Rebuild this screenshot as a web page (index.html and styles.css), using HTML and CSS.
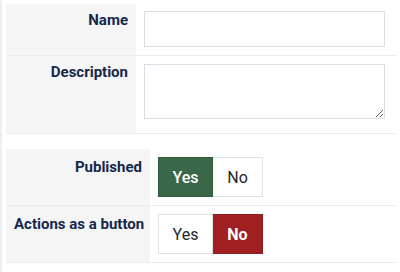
FILE: index.html
```html
<!DOCTYPE html>
<html lang="en">
<head>
    <meta charset="UTF-8">
    <title>Item options</title>
    <link rel="stylesheet" href="styles.css">
</head>
<body>
    <div class="page">
        <table class="form_table">
            <tr>
                <th class="label_cell">Name</th>
                <td class="field_cell"><input type="text" class="text_input"></td>
            </tr>
            <tr>
                <th class="label_cell">Description</th>
                <td class="field_cell field_area"><textarea class="text_area"></textarea></td>
            </tr>
        </table>

        <table class="form_table options_table">
            <tr>
                <th class="label_cell">Published</th>
                <td class="field_cell">
                    <div class="switcher">
                        <span class="switch_btn switch_yes active_yes">Yes</span>
                        <span class="switch_btn switch_no">No</span>
                    </div>
                </td>
            </tr>
            <tr>
                <th class="label_cell">Actions as a button</th>
                <td class="field_cell">
                    <div class="switcher">
                        <span class="switch_btn switch_yes">Yes</span>
                        <span class="switch_btn switch_no active_no">No</span>
                    </div>
                </td>
            </tr>
        </table>
    </div>
</body>
</html>
```

FILE: styles.css
```css
body {
    font-family: 'Roboto', 'Liberation Sans', sans-serif;
    margin: 0;
    padding: 0;
    background-color: #ffffff;
    color: #22262a;
}

.page {
    min-height: 272px;
    box-sizing: border-box;
    border-left: 2px solid #eaeff5; /* светлая полоса слева */
    padding: 4px 3px 0 4px;
}

.form_table {
    width: 391px;
    table-layout: fixed;
    border-collapse: collapse;
    margin-bottom: 15px;
    border-bottom: 1px solid #ececec;
}

.form_table tr {
    border-bottom: 1px solid #ececec;
}

.label_cell {
    width: 114px;
    background-color: #f5f5f5;
    text-align: right;
    vertical-align: top;
    white-space: nowrap;
    padding: 6px 8px 0 8px;
    font-size: 15px;
    font-weight: bold;
    line-height: 1.4;
    color: #14284a;
}

.options_table .label_cell {
    width: 128px;
    padding-top: 8px;
}

.field_cell {
    vertical-align: top;
    padding: 7px 13px 8px 8px;
}

.field_area {
    padding-top: 8px;
    padding-bottom: 14px;
}

.text_input {
    display: block;
    box-sizing: border-box;
    width: 241px;
    height: 36px;
    border: 1px solid #d9dee5;
    border-radius: 0;
    margin: 0;
}

.text_area {
    display: block;
    box-sizing: border-box;
    width: 241px;
    height: 55px;
    border: 1px solid #d9dee5;
    border-radius: 0;
    margin: 0;
}

.options_table .field_cell {
    padding-top: 8px;
    padding-bottom: 8px;
}

.switcher {
    display: flex;
}

.switch_btn {
    display: flex;
    align-items: center;
    justify-content: center;
    box-sizing: border-box;
    height: 40px;
    border: 1px solid #dfe3e8;
    font-size: 16px;
    color: #22262a;
    background-color: #ffffff;
}

.switch_yes {
    width: 55px;
}

.switch_no {
    width: 50px;
    border-left: none;
}

.active_yes {
    background-color: #3a6747;
    border-color: #2f5a3b;
    color: #ffffff;
    font-weight: 500;
}

.active_no {
    background-color: #a01f21;
    border-color: #8f1b1d;
    color: #ffffff;
    font-weight: bold;
}
```
